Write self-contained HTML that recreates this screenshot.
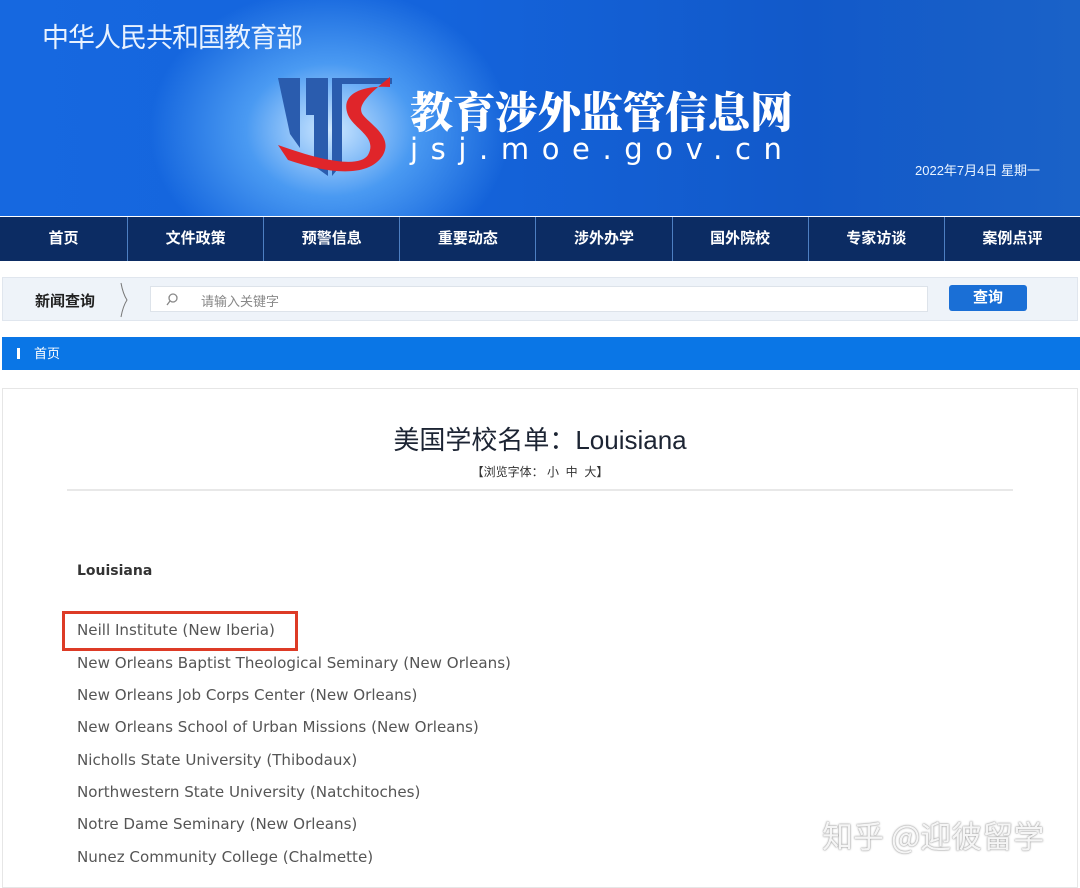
<!DOCTYPE html>
<html><head><meta charset="utf-8"><style>
*{margin:0;padding:0;box-sizing:border-box}
body{width:1080px;height:880px;overflow:hidden;background:#fff;font-family:"Liberation Sans","Noto Sans CJK SC",sans-serif;position:relative}
.hdr{position:absolute;left:0;top:0;width:1080px;height:216px;background:radial-gradient(ellipse 240px 190px at 330px 130px,#cfe8ff 0%,#4a9af2 35%,rgba(20,100,230,0) 75%),linear-gradient(90deg,#1668e0 0%,#1464dc 40%,#1259c9 75%,#1a62c8 100%)}
.t1{position:absolute;left:42px;top:16px;color:#e8f2ff;font-size:27px;font-family:"Noto Sans CJK SC",sans-serif;letter-spacing:-1px}
.t2{position:absolute;left:410px;top:80px;color:#fff;font-size:43px;font-family:"Noto Serif CJK SC",serif;font-weight:900;letter-spacing:-0.5px}
.t3{position:absolute;left:410px;top:132px;color:#fff;font-size:29px;letter-spacing:12.6px;font-family:"DejaVu Sans",sans-serif}
.date{position:absolute;left:915px;top:160px;color:#eaf4ff;font-size:13px}
.nav{position:absolute;left:0;top:217px;width:1080px;height:44px;background:#0c2c63;display:flex}
.nav div{flex:1;color:#fff;font-size:15px;font-weight:bold;text-align:center;line-height:44px;border-right:1px solid #4d7fc2}
.nav div:first-child{flex:0 0 128px}
.nav div:last-child{border:none}
.srch{position:absolute;left:2px;top:277px;width:1076px;height:44px;background:#eef3f9;border:1px solid #e0e6ee}
.srch .l{position:absolute;left:32px;top:12px;font-size:15px;font-weight:bold;color:#222}
.srch .in{position:absolute;left:147px;top:8px;width:778px;height:26px;background:#fff;border:1px solid #dde3ea}
.srch .in span{position:absolute;left:50px;top:4px;font-size:13px;color:#888}
.btn{position:absolute;left:946px;top:7px;width:78px;height:26px;background:#1a6fd6;border-radius:3px;color:#fff;font-size:15px;font-weight:bold;text-align:center;line-height:26px}
.bar{position:absolute;left:2px;top:337px;width:1078px;height:33px;background:#0a76e6;color:#fff;font-size:13px;line-height:33px;padding-left:32px}
.bar:before{content:"";position:absolute;left:15px;top:11px;width:3px;height:11px;background:#fff}
.box{position:absolute;left:2px;top:388px;width:1076px;height:500px;border:1px solid #e6e6e6}
h1{position:absolute;left:0;width:1080px;top:420px;text-align:center;font-size:26px;font-weight:normal;color:#1c2433}
.sz{position:absolute;left:0;width:1080px;top:463px;text-align:center;font-size:12px;color:#333}
.hr{position:absolute;left:67px;top:489px;width:946px;height:2px;background:#e8e8e8}
.li{position:absolute;left:77px;font-family:"DejaVu Sans",sans-serif;font-size:15.1px;color:#555}
.red{position:absolute;left:62px;top:611px;width:236px;height:40px;border:3px solid #dd3b26}
.wm{position:absolute;left:822px;top:812px;font-size:31px;color:rgba(255,255,255,.9);text-shadow:0 0 2px #999,0 0 1px #888;font-family:"Noto Sans CJK SC",sans-serif}
</style></head><body>
<div class="hdr">
<div class="t1">中华人民共和国教育部</div>
<svg style="position:absolute;left:270px;top:75px" width="130" height="110" viewBox="0 0 130 110">
<path d="M8 3h22v70l-10-14zM36 3h22v98l-14-10V40h-8zM62 3h60v6h-50v80l-10 12z" fill="#2a5cae"/>
<path d="M120 12C90 10 70 20 78 40c6 14 30 22 20 40c-8 12-40 8-90-10l10 15c35 12 80 20 95-5c10-18-12-30-20-40c-6-8 2-18 27-38z" fill="#e0252a"/>
</svg>
<div class="t2">教育涉外监管信息网</div>
<div class="t3">jsj.moe.gov.cn</div>
<div class="date">2022年7月4日 星期一</div>
</div>
<div class="nav"><div>首页</div><div>文件政策</div><div>预警信息</div><div>重要动态</div><div>涉外办学</div><div>国外院校</div><div>专家访谈</div><div>案例点评</div></div>
<div class="srch"><div class="l">新闻查询</div>
<svg style="position:absolute;left:116px;top:4px" width="10" height="36"><path d="M2 1 Q4 12 8 18 Q4 24 2 35" stroke="#777" fill="none"/></svg>
<div class="in"><svg style="position:absolute;left:14px;top:5px" width="14" height="14"><circle cx="8" cy="6" r="4" stroke="#888" fill="none" stroke-width="1.3"/><path d="M5 9L2 13" stroke="#888" stroke-width="1.3"/></svg><span>请输入关键字</span></div>
<div class="btn">查询</div></div>
<div class="bar">首页</div>
<div class="box"></div>
<h1>美国学校名单：Louisiana</h1>
<div class="sz">【浏览字体： 小 &nbsp;中 &nbsp;大】</div>
<div class="hr"></div>
<div class="li" style="top:563px;font-weight:bold;color:#333;font-size:14px">Louisiana</div>
<div class="red"></div>
<div class="li" style="top:621px">Neill Institute (New Iberia)</div>
<div class="li" style="top:654px">New Orleans Baptist Theological Seminary (New Orleans)</div>
<div class="li" style="top:686px">New Orleans Job Corps Center (New Orleans)</div>
<div class="li" style="top:718px">New Orleans School of Urban Missions (New Orleans)</div>
<div class="li" style="top:751px">Nicholls State University (Thibodaux)</div>
<div class="li" style="top:783px">Northwestern State University (Natchitoches)</div>
<div class="li" style="top:815px">Notre Dame Seminary (New Orleans)</div>
<div class="li" style="top:848px">Nunez Community College (Chalmette)</div>
<div class="wm">知乎 @迎彼留学</div>
</body></html>
